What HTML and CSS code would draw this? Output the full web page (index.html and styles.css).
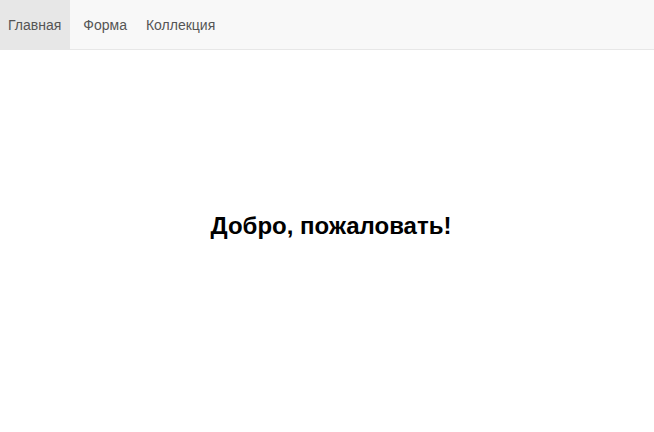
FILE: index.html
```html
<!DOCTYPE html>
<html lang="ru">
<head>
<meta charset="utf-8">
<link rel="stylesheet" href="styles.css">
</head>
<body>
<nav class="navbar">
  <a class="nav-link active" href="#">Главная</a>
  <a class="nav-link" href="#">Форма</a>
  <a class="nav-link" href="#">Коллекция</a>
</nav>
<main class="content">
  <h1 class="title">Добро, пожаловать!</h1>
</main>
</body>
</html>
```

FILE: styles.css
```css
* { box-sizing: border-box; }
html, body { margin: 0; padding: 0; background: #fff; }
body { font-family: "Liberation Sans", Arial, sans-serif; }
.navbar {
  display: flex;
  height: 50px;
  background: #f8f8f8;
  border-bottom: 1px solid #e7e7e7;
}
.nav-link {
  display: flex;
  align-items: center;
  padding: 0 8px;
  margin-right: 3px;
  font-size: 14px;
  color: #555;
  text-decoration: none;
}
.nav-link.active { background: #e7e7e7; padding-right: 9px; margin-right: 5px; }
.content {
  height: 352px;
  padding-left: 8px;
  display: flex;
  align-items: center;
  justify-content: center;
}
.title {
  margin: 0;
  font-size: 24px;
  font-weight: bold;
  color: #000;
}
```
